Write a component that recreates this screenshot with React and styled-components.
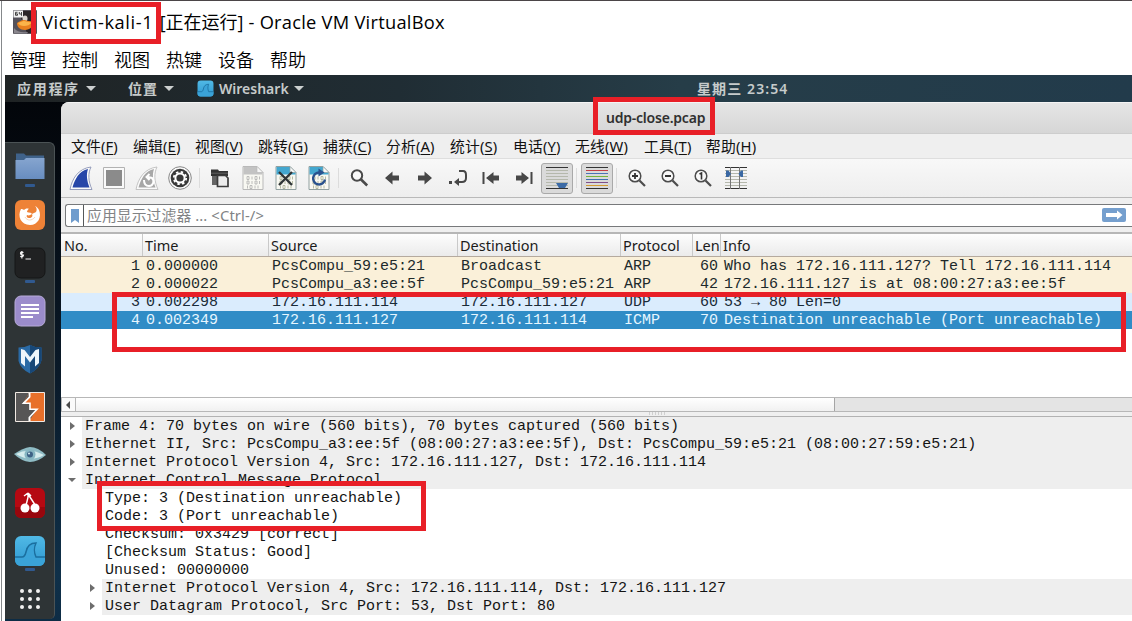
import React from "react";
import styled, { createGlobalStyle } from "styled-components";

const ui = `"Noto Sans", "Noto Sans CJK SC", sans-serif`;
const host = `"Open Sans", "Noto Sans CJK SC", sans-serif`;

const Global = createGlobalStyle`
  * { box-sizing: border-box; }
  body { margin: 0; background: #fff; overflow: hidden; }
`;

const HostWindow = styled.div`
  position: relative;
  width: 1132px;
  height: 621px;
  display: flex;
  flex-direction: column;
  background: #fff;
  overflow: hidden;
  border-top: 1px solid #4b4547;
  &::before {
    content: "";
    position: absolute;
    left: 1px;
    top: 0;
    bottom: 0;
    width: 1px;
    background: #85888b;
  }
`;

const TitleBar = styled.header`
  height: 44px;
  flex: none;
  display: flex;
  align-items: center;
  padding: 0 0 2px 13px;
  font: 18.3px/24px ${host};
  color: #000;
  white-space: pre;
`;

const TitlePart = styled.span`
  width: ${(p) => p.$w}px;
  padding-left: ${(p) => p.$pad || 0}px;
  letter-spacing: ${(p) => p.$ls || 0}px;
  font-size: ${(p) => p.$size || 18.3}px;
`;

const HostMenu = styled.nav`
  height: 30px;
  flex: none;
  display: flex;
  align-items: center;
  padding-left: 10px;
  font: 350 18px/28px ${host};
  span { width: 52px; }
`;

const Guest = styled.main`
  flex: 1;
  min-height: 0;
  margin-left: 5px;
  display: flex;
  flex-direction: column;
  background: linear-gradient(180deg, #020408 0, #04090f 80px, #0a1a29 300px, #0f3049 500px, #0d2c45 100%);
`;

const Panel = styled.div`
  height: 27px;
  flex: none;
  display: flex;
  align-items: center;
  background: linear-gradient(90deg, #1f2324 0, #202d34 35%, #263d48 60%, #223b4b 100%);
  color: #c6cbcb;
  font: 600 14px/26px ${ui};
  padding-left: 12px;
`;

const PanelItem = styled.div`
  display: flex;
  align-items: center;
  width: ${(p) => p.$w}px;
  letter-spacing: ${(p) => p.$ls || 0}px;
  gap: ${(p) => p.$gap || 5}px;
  white-space: pre;
`;

const Caret = styled.i`
  border: 5px solid transparent;
  border-top-color: #ccd0d0;
  border-bottom: 0;
`;

const Desktop = styled.div`
  flex: 1;
  min-height: 0;
  display: flex;
`;

const Dock = styled.aside`
  width: 50px;
  margin: 40px 6px 2px 0;
  flex: none;
  background: #2e3436;
  border: 1px solid #4b5355;
  border-left: 0;
  border-bottom: 0;
  border-radius: 0 6px 5px 0;
  display: flex;
  flex-direction: column;
`;

const DockItem = styled.div`
  height: 48px;
  flex: none;
  display: flex;
  justify-content: center;
  align-items: center;
  position: relative;
  padding-bottom: 1px;
  svg { width: 32px; height: 32px; }
  &::after {
    content: "";
    display: ${(p) => (p.$running ? "block" : "none")};
    position: absolute;
    bottom: 4px;
    left: 20px;
    width: 10px;
    height: 3px;
    border-radius: 1px;
    background: #30598f;
  }
`;

const Shark = styled.section`
  flex: 1;
  min-width: 0;
  display: flex;
  flex-direction: column;
  background: #efefef;
  border-radius: 8px 0 0 0;
  overflow: hidden;
  color: #1c1c1c;
`;

const SharkTitle = styled.div`
  height: 32px;
  flex: none;
  background: linear-gradient(#e5e5e5, #d6d6d6);
  border-top: 1px solid #f4f4f4;
  border-bottom: 1px solid #cdcdcd;
  font: 600 14px/30px ${ui};
  letter-spacing: -0.22px;
  color: #303030;
  padding-left: 545px;
`;

const SharkMenu = styled.nav`
  height: 24px;
  flex: none;
  display: flex;
  padding-left: 10px;
  font: 14.8px/24px ${ui};
  color: #111;
`;

const MenuItem = styled.span`
  width: ${(p) => p.$w}px;
  letter-spacing: 0.15px;
  white-space: nowrap;
  u { text-underline-offset: 2px; }
`;

const Toolbar = styled.div`
  height: 40px;
  flex: none;
  display: flex;
  align-items: center;
  background: linear-gradient(#f8f8f8, #eeeeee);
  border-top: 1px solid #dedede;
  border-bottom: 1px solid #b9b9b9;
  padding-left: 3px;
`;

const Tool = styled.div`
  width: 33px;
  height: 32px;
  display: flex;
  align-items: center;
  justify-content: center;
  svg { width: 24px; height: 24px; display: block; }
`;

const ToggleFace = styled.div`
  width: 32px;
  height: 31px;
  flex: none;
  display: flex;
  align-items: center;
  justify-content: center;
  background: #dadada;
  border: 1px solid #a9a9a9;
  border-radius: 3px;
`;

const Sep = styled.i`
  width: 1px;
  height: 20px;
  margin: 0 3px;
  background: #dcdcdc;
`;

const FilterRow = styled.div`
  height: 34px;
  flex: none;
  padding: 6px 0 5px 4px;
`;

const FilterBox = styled.div`
  height: 23px;
  display: flex;
  align-items: center;
  background: #fff;
  border: 1px solid #77797b;
  border-right: 0;
  border-radius: 3px 0 0 3px;
  font: 14.8px/21px ${ui};
  letter-spacing: 0.1px;
  color: #818385;
  white-space: pre;
`;

const Bookmark = styled.span`
  width: 18px;
  height: 21px;
  border-right: 1px solid #55585a;
  display: flex;
  justify-content: center;
  align-items: center;
  margin-right: 3px;
`;

const Apply = styled.span`
  margin-left: auto;
  margin-right: 6px;
  display: flex;
  padding-bottom: 1px;
`;

const cols = "81px 126px 189px 163px 72px 28px 1fr";

const ListHead = styled.div`
  display: grid;
  grid-template-columns: ${cols};
  height: 25px;
  flex: none;
  border-top: 2px solid #b6b6b6;
  border-bottom: 1px solid #b5aa9e;
  background: linear-gradient(#fdfdfd, #ebebeb);
  font: 14.5px/23px ${ui};
  color: #1b1b1b;
  span { padding-left: 2px; overflow: hidden; border-left: 1px solid #c9c9c9; white-space: nowrap; }
  span:first-child { border-left-color: transparent; }
`;

const PacketList = styled.div`
  height: 140px;
  flex: none;
  background: #fff;
  font: 15px/18px "Liberation Mono", monospace;
`;

const Packet = styled.div`
  display: grid;
  grid-template-columns: ${cols};
  height: 18px;
  background: ${(p) => p.$bg};
  color: ${(p) => p.$fg};
  white-space: pre;
  span { padding: 1px 0 0 4px; height: 18px; }
  span:nth-child(1), span:nth-child(6) { text-align: right; padding: 1px 2px 0 0; }
`;

const Scroll = styled.div`
  height: 15px;
  flex: none;
  display: flex;
  background: #e4e4e4;
  border: 1px solid #b7b7b7;
  border-right: 0;
`;

const ScrollButton = styled.span`
  width: 14px;
  background: #fafafa;
  border-right: 1px solid #b7b7b7;
  display: flex;
  align-items: center;
  justify-content: center;
  i { border: 4px solid transparent; border-right-color: #4a4a4a; border-left: 0; margin-right: 2px; }
`;

const ScrollThumb = styled.span`
  width: 759px;
  background: linear-gradient(#fff, #f1f1f1);
  border-right: 1px solid #a5a5a5;
`;

const Splitter = styled.div`
  height: 5px;
  flex: none;
  border-bottom: 1px solid #b2b2b2;
  padding-left: 588px;
  &::before {
    content: "";
    display: block;
    width: 17px;
    height: 3px;
    background: repeating-linear-gradient(90deg, #d0d0d0 0 1px, transparent 1px 3px);
  }
`;

const Tree = styled.div`
  flex: 1;
  background: #fff;
  font: 15px/18px "Liberation Mono", monospace;
  color: #141414;
`;

const TreeRow = styled.div`
  height: 18px;
  display: flex;
  padding-left: ${(p) => p.$level * 20}px;
  white-space: pre;
`;

const Twist = styled.span`
  width: 21px;
  display: flex;
  align-items: center;
  justify-content: center;
  padding-left: 1px;
  i {
    border: 4px solid transparent;
    ${(p) => (p.$open ? "border-top-color: #6d6d6d; border-bottom: 0;" : p.$open === false ? "border-left: 5px solid #6d6d6d; border-right: 0;" : "")}
  }
`;

const TreeText = styled.span`
  flex: 1;
  padding-left: 3px;
  line-height: 19px;
  background: ${(p) => (p.$shade ? "#eeeeee" : "transparent")};
`;

const Mark = styled.div`
  position: absolute;
  left: ${(p) => p.$x}px;
  top: ${(p) => p.$y - 1}px;
  width: ${(p) => p.$w}px;
  height: ${(p) => p.$h}px;
  border: 5px solid #e81f27;
`;

const svg = (children, vb = "0 0 24 24") => <svg viewBox={vb} fill="none">{children}</svg>;

const VmIcon = () => (
  <svg width="24" height="24" viewBox="0 0 24 24" fill="none">
    <rect width="24" height="24" rx="1" fill="#55525a" />
    <path d="M9 1h14v22H14L8 8z" fill="#2b2528" />
    <ellipse cx="12" cy="8.500" rx="2.500" ry="3" fill="#d9d4cf" />
    <rect x=".5" y=".5" width="9.500" height="7" fill="#f2f2f2" />
    <path d="M4.500 2.300H2.500v3h2V3.900h-2M6.300 2v2h2.200M8.500 2v3.800" stroke="#333" strokeWidth=".9" />
    <path d="M4 13c2-1 4-3 7-3s5 2 9 1c1 5-3 9-8 9s-8-3-8-7z" fill="#e8801f" />
    <path d="M5 13c3-1 4-2 6-2s5 2 8 1c-2 3-5 4-8 4s-5-1-6-3z" fill="#fbb44a" />
    <path d="M1 18c3 4 8 5 14 4l-1 1.500H1z" fill="#8a878e" />
  </svg>
);

const SharkLogo = ({ size = 32 }) => (
  <svg style={{ width: size, height: size }} viewBox="0 0 32 32">
    <defs><linearGradient id="sea" x2="0" y2="1"><stop stopColor="#50b9e6" /><stop offset="1" stopColor="#2f98d0" /></linearGradient></defs>
    <rect x="1" y="1" width="30" height="30" rx="6" fill="url(#sea)" />
    <path d="M1 22h7c2 0 3-1 4-5 1-6 4-9 10-9-2 4-2 10 0 14h9v3a6 6 0 0 1-6 6H7a6 6 0 0 1-6-6z" fill="#3aa3d8" />
    <path d="M1 22h7c2 0 3-1 4-5 1-6 4-9 10-9-2 4-2 10 0 14h9" fill="none" stroke="#1b6f9f" strokeWidth="1.500" />
  </svg>
);

const dockIcons = [
  [svg(<><defs><linearGradient id="folder" x2="0" y2="1"><stop stopColor="#86a5cf" /><stop offset="1" stopColor="#688dc0" /></linearGradient></defs><path d="M2 2.500h8l2 2h18v8H2z" fill="#3f628a" /><path d="M1.500 9h8.500l2-2h18.500v21h-29z" fill="url(#folder)" /></>, "0 0 32 32"), true],
  [svg(<><rect x="1" y="1" width="30" height="30" rx="6" fill="#ee8237" /><path d="M7 10c-4 7 0 16 9 16 8 0 12-8 9-15-1-2-2-3-4-4 2 2 2 4 1 6-1 1-3 1-4 2 1 2 0 4-3 4-2 0-3-2-2-3 2 1 3 0 5-1-1-2-3-1-5-2 0-1 1-3 2-3-2-1-4 0-5 1-1-1-2-1-3-1z" fill="#fff" /><path d="M11 18c2 4 7 4 10 0" stroke="#f8d6bb" strokeWidth="1" /></>, "0 0 32 32")],
  [svg(<><rect x="1" y="1" width="30" height="30" rx="6" fill="#202122" stroke="#151616" /><path d="M9.500 5.500q-3-1-3 .800t3 1.800q0 2-3.300 1.200M7.900 4v7.500M11.500 12H17" stroke="#f2f2f2" strokeWidth="1.200" /></>, "0 0 32 32"), true],
  [svg(<><rect x="1" y="1" width="30" height="30" rx="6" fill="#9b8ccb" stroke="#b7abd8" /><path d="M7 10h18M7 14h18M7 18h18M7 22h12" stroke="#fff" strokeWidth="2" /></>, "0 0 32 32")],
  [svg(<><path d="M4.500 4.500q6 0 11.500-2.500 5 2.500 11.500 2.500v13q-2 8-11.500 13Q6.500 26 4.500 18z" fill="#2a6aa5" /><path d="M16 2q5 2.500 11.500 2.500v13q-2 8-11.500 13z" fill="#174777" /><path d="m7 6 3.500 1L16 14l5.500-7L25 6v14l-4 3.500V13l-5 6.500-5-6.500v10.500L7 20z" fill="#edf5fb" /></>, "0 0 32 32")],
  [svg(<><path d="M1.500 1.500h29v29h-29z" fill="#575656" /><path d="M15 2h15v28H15l8-11.700h-7v-6H9z" fill="#e8702a" /><path d="M15.500 2v4l-6 6.300H16v6h7l-7.500 8V30" stroke="#fff" strokeWidth="1.600" fill="none" /><path d="M15 2v4.500L9.500 12.300z" fill="#575656" /><path d="M15.500 1.500V6L9.500 12.300M15.500 30v-3.700" stroke="#fff" strokeWidth="1.600" /><path d="M1.500 1.500h29v29h-29z" stroke="#f0e9e3" /></>, "0 0 32 32")],
  [svg(<><path d="M0 15Q9 9 16 8q8 0 16 8-8 7-16 7Q7 22 0 15z" fill="#8fbcc5" /><path d="M2 15q13-7 28 1-14 8-28-1z" fill="#d5eced" /><circle cx="16" cy="15.500" r="5.500" fill="#86b6c2" /><circle cx="16" cy="15.500" r="3" fill="#3d6285" /><circle cx="15" cy="14.500" r="1" fill="#d5eef2" /></>, "0 0 32 32")],
  [svg(<><rect x="1" y="1" width="30" height="30" rx="6" fill="#b50912" /><path d="M1 20h30v5a6 6 0 0 1-6 6H7a6 6 0 0 1-6-6z" fill="#98060d" /><path d="M12 19c0-4 3-7 2-13 2 6 6 8 7 13M14 6l-4 3M14 6l3 3" stroke="#fff" strokeWidth="1.500" /><circle cx="11" cy="21" r="4.500" fill="#fff" /><circle cx="21" cy="21" r="4.500" fill="#fff" /></>, "0 0 32 32")],
  [<SharkLogo />, true],
  [svg(<g fill="#f2f2f2">{[6, 14, 22].map((y) => [6, 14, 22].map((x) => <circle key={x + "-" + y} cx={x + 2} cy={y + 2} r="2" />))}</g>, "0 0 32 32")],
];

const Fin = ({ fill, ring, restart }) => svg(
  <>
    <path d="M1 23.500C3 13 9 2.500 22 1c-3 6-3 14 1 22.500z" fill="#fbfbfb" stroke={ring} strokeWidth=".9" />
    <path d="M3.500 21.500C6 13 10 5 19 3c-2 6-1 12 1.500 18.500z" fill={fill} />
    {restart && <path d="M9 14c0 4 2 6 5 6 4 0 6-5 3-8l-4-1M14.500 8l-3 3 3 3" stroke="#fff" strokeWidth="2" />}
  </>
);

const FileSheet = ({ head, ink, border, children }) => svg(
  <>
    <path d="M2 .5h14l6 6v17H2z" fill="#f8f8f2" stroke={border} />
    <path d="M2.500 1H16v5h5.500v2.500h-19z" fill={head} />
    <path d="M16 .5v6h6z" fill="#f7f7f7" stroke={border} strokeWidth=".7" />
    <path d="M6 10.500h2v3H6zM11 10.500v3M14 10.500h2v3h-2zM18.500 10.500v3M6 15h2v3H6zM11 15v3M14 15h2v3h-2zM18.500 15v3M6.500 19.500v3M9 19.500h2v3H9zM14 19.500v3M17 19.500v3" stroke={ink} strokeWidth=".8" />
    {children}
  </>
);

const arrowRight = "M5 9.500h6.500V5.500L19 12l-7.500 6.500v-4H5z";
const arrowLeft = "M19 9.500h-6.500V5.500L5 12l7.500 6.500v-4H19z";

const Magnifier = ({ children, big }) => svg(
  big ? (
    <><circle cx="10" cy="9.500" r="5.200" stroke="#4a4a4a" strokeWidth="2" fill="#f8f8f8" /><path d="m13.800 13.300 6.400 6.200" stroke="#4a4a4a" strokeWidth="2.600" /></>
  ) : (
    <><circle cx="10" cy="10" r="5.800" stroke="#4c4c4c" strokeWidth="1.500" fill="#f8f8f8" /><path d="m14.500 14.500 5.500 5.500" stroke="#4c4c4c" strokeWidth="2.200" />{children}</>
  )
);

const Stripes = ({ colors, children }) => svg(
  <>
    {colors.map((c, i) => <path key={i} d={`M1 ${1.5 + i * 3}h22`} stroke={c} strokeWidth="1.200" />)}
    {children}
  </>
);

const dark = "#474747";
const pale = "#b5b8ac";

const Tools = () => (
  <Toolbar>
    <Tool><Fin fill="#2746a8" ring="#8a93b4" /></Tool>
    <Tool>{svg(<><path d="M1.500 1.500h21v21h-21z" fill="#fafafa" stroke="#b2b2b2" /><path d="M4 4h16v16H4z" fill="#8b8b8b" /></>)}</Tool>
    <Tool><Fin fill="#a7a7a7" ring="#bdbdbd" restart /></Tool>
    <Tool>{svg(<><circle cx="12" cy="12" r="11.300" fill="#fafafa" stroke="#888" /><circle cx="12" cy="12" r="9.300" fill="#393939" /><circle cx="12" cy="12" r="4.600" stroke="#fff" strokeWidth="2" /><circle cx="12" cy="12" r="6.200" stroke="#fff" strokeWidth="1.800" strokeDasharray="2.435 2.435" /></>)}</Tool>
    <Sep />
    <Tool>{svg(<><path d="M3 3.500h7l1 1.500h9v5H3z" fill="#333" /><path d="M3 7.200h17" stroke="#777" strokeWidth=".7" /><path d="M4 10h5v9H4z" fill="#666" /><path d="M9.500 9.500h8l2.500 2.500v8.500H9.500z" fill="#ececec" stroke="#3d3d3d" strokeWidth="1.700" /></>)}</Tool>
    <Tool><FileSheet head="#c3c3c3" ink="#adadad" border="#b9b9b9" /></Tool>
    <Tool><FileSheet head="#43a7cf" ink="#a5ab8e" border="#91a0a0"><path d="m5 6 13 13M18 6 5 19" stroke="#2f3537" strokeWidth="2.300" /></FileSheet></Tool>
    <Tool><FileSheet head="#43a7cf" ink="#a5ab8e" border="#91a0a0"><path d="M12.500 6.500a6 6 0 1 0 5.500 7" stroke="#29528e" strokeWidth="2.400" /><path d="M11.500 2.500v8l6-4z" fill="#29528e" /></FileSheet></Tool>
    <Sep />
    <Tool><Magnifier big /></Tool>
    <Tool>{svg(<path d={arrowLeft} fill={dark} />)}</Tool>
    <Tool>{svg(<path d={arrowRight} fill={dark} />)}</Tool>
    <Tool>{svg(<><path d="M13 5h4q3 0 3 4v3q0 4-4 4h-4" stroke={dark} strokeWidth="2" /><path d="m8 16 5-4v8z" fill={dark} /><path d="M3 15h3v3H3z" fill={dark} /></>)}</Tool>
    <Tool>{svg(<><path d="M4.500 6v12" stroke={dark} strokeWidth="2" /><path d="M20 9.500h-5.500V6L7 12l7.500 6v-3.500H20z" fill={dark} /></>)}</Tool>
    <Tool>{svg(<><path d="M19.500 6v12" stroke={dark} strokeWidth="2" /><path d="M4 9.500h5.500V6l7.500 6-7.500 6v-3.500H4z" fill={dark} /></>)}</Tool>
    <Tool><ToggleFace><Stripes colors={["#333", pale, pale, pale, pale, pale, pale, "#333"]}><path d="M11 17h12l-3 5h-6z" fill="#3b6aa6" /></Stripes></ToggleFace></Tool>
    <Sep />
    <Tool><ToggleFace><Stripes colors={["#333", "#c33f45", "#4b73b5", "#76b43a", "#3e70ad", "#80508b", "#d39c32", "#333"]} /></ToggleFace></Tool>
    <Sep />
    <Tool><Magnifier><path d="M10 7v6M7 10h6" stroke="#333" strokeWidth="1.800" /></Magnifier></Tool>
    <Tool><Magnifier><path d="M7 10h6" stroke="#333" strokeWidth="1.800" /></Magnifier></Tool>
    <Tool><Magnifier><path d="m8.500 8 2-1v6.500" stroke="#333" strokeWidth="1.600" /></Magnifier></Tool>
    <Tool><Stripes colors={["#333", pale, pale, pale, pale, pale, pale, "#333"]}><path d="M6.500 1v22M15.500 1v22" stroke="#777" /><path d="M2 4.500h2.500L7 8l-2.500 3H2zM19 4.500h-2L14.500 8l2.500 3h2z" fill="#3a68a3" /></Stripes></Tool>
  </Toolbar>
);

const menus = [["文件", "F", 62], ["编辑", "E", 62], ["视图", "V", 63], ["跳转", "G", 65], ["捕获", "C", 63], ["分析", "A", 64], ["统计", "S", 63], ["电话", "Y", 62], ["无线", "W", 69], ["工具", "T", 62], ["帮助", "H", 60]];

const arp = ["#faf0d9", "#20292b"];
const packets = [
  [arp, "1", "0.000000", "PcsCompu_59:e5:21", "Broadcast", "ARP", "60", "Who has 172.16.111.127? Tell 172.16.111.114"],
  [arp, "2", "0.000022", "PcsCompu_a3:ee:5f", "PcsCompu_59:e5:21", "ARP", "42", "172.16.111.127 is at 08:00:27:a3:ee:5f"],
  [["#daecfd", "#1a2b38"], "3", "0.002298", "172.16.111.114", "172.16.111.127", "UDP", "60", "53 → 80 Len=0"],
  [["#308cc6", "#e6f6ff"], "4", "0.002349", "172.16.111.127", "172.16.111.114", "ICMP", "70", "Destination unreachable (Port unreachable)"],
];

const tree = [
  [0, false, "Frame 4: 70 bytes on wire (560 bits), 70 bytes captured (560 bits)"],
  [0, false, "Ethernet II, Src: PcsCompu_a3:ee:5f (08:00:27:a3:ee:5f), Dst: PcsCompu_59:e5:21 (08:00:27:59:e5:21)"],
  [0, false, "Internet Protocol Version 4, Src: 172.16.111.127, Dst: 172.16.111.114"],
  [0, true, "Internet Control Message Protocol"],
  [1, null, "Type: 3 (Destination unreachable)"],
  [1, null, "Code: 3 (Port unreachable)"],
  [1, null, "Checksum: 0x3429 [correct]"],
  [1, null, "[Checksum Status: Good]"],
  [1, null, "Unused: 00000000"],
  [1, false, "Internet Protocol Version 4, Src: 172.16.111.114, Dst: 172.16.111.127"],
  [1, false, "User Datagram Protocol, Src Port: 53, Dst Port: 80"],
];

export default function App() {
  return (
    <HostWindow>
      <Global />
      <TitleBar>
        <VmIcon />
        <TitlePart $w={118} $pad={5} $ls={0.6}>Victim-kali-1</TitlePart>
        <TitlePart $w={93.500} $size={18}> [正在运行]</TitlePart>
        <TitlePart $w={220} $ls={0.25}>- Oracle VM VirtualBox</TitlePart>
      </TitleBar>
      <HostMenu>
        {["管理", "控制", "视图", "热键", "设备", "帮助"].map((m) => <span key={m}>{m}</span>)}
      </HostMenu>
      <Guest>
        <Panel>
          <PanelItem $w={111} $ls={1.7} $gap={6}>应用程序<Caret /></PanelItem>
          <PanelItem $w={69} $ls={1} $gap={6}>位置<Caret /></PanelItem>
          <PanelItem $w={500}><SharkLogo size={17} />Wireshark<Caret /></PanelItem>
          <PanelItem $w={120} $ls={1.1}>星期三 23:54</PanelItem>
        </Panel>
        <Desktop>
          <Dock>
            {dockIcons.map(([icon, running], i) => <DockItem key={i} $running={running}>{icon}</DockItem>)}
          </Dock>
          <Shark>
            <SharkTitle>udp-close.pcap</SharkTitle>
            <SharkMenu>
              {menus.map(([t, k, w]) => <MenuItem key={k} $w={w}>{t}(<u>{k}</u>)</MenuItem>)}
            </SharkMenu>
            <Tools />
            <FilterRow>
              <FilterBox>
                <Bookmark><svg width="8" height="14" viewBox="0 0 8 14"><path d="M0 0h8v14l-4-3-4 3z" fill="#6f9ccd" /></svg></Bookmark>
                应用显示过滤器 ... &lt;Ctrl-/&gt;
                <Apply><svg width="24" height="14" viewBox="0 0 24 14"><rect width="24" height="14" rx="2" fill="#759fce" /><path d="M4 5h11V2.500L20.500 7 15 11.500V9H4z" fill="#fff" /></svg></Apply>
              </FilterBox>
            </FilterRow>
            <ListHead>
              {["No.", "Time", "Source", "Destination", "Protocol", "Len", "Info"].map((h) => <span key={h}>{h}</span>)}
            </ListHead>
            <PacketList>
              {packets.map(([[bg, fg], ...cells]) => (
                <Packet key={cells[0]} $bg={bg} $fg={fg}>
                  {cells.map((c, i) => <span key={i}>{c}</span>)}
                </Packet>
              ))}
            </PacketList>
            <Scroll><ScrollButton><i /></ScrollButton><ScrollThumb /></Scroll>
            <Splitter />
            <Tree>
              {tree.map(([level, open, text]) => (
                <TreeRow key={text} $level={level}>
                  <Twist $open={open}>{open !== null && <i />}</Twist>
                  <TreeText $shade={open !== null}>{text}</TreeText>
                </TreeRow>
              ))}
            </Tree>
          </Shark>
        </Desktop>
      </Guest>
      <Mark $x={31} $y={2} $w={130} $h={42} />
      <Mark $x={593} $y={97} $w={122} $h={38} />
      <Mark $x={112} $y={292} $w={1014} $h={60} />
      <Mark $x={97} $y={481} $w={329} $h={50} />
    </HostWindow>
  );
}
